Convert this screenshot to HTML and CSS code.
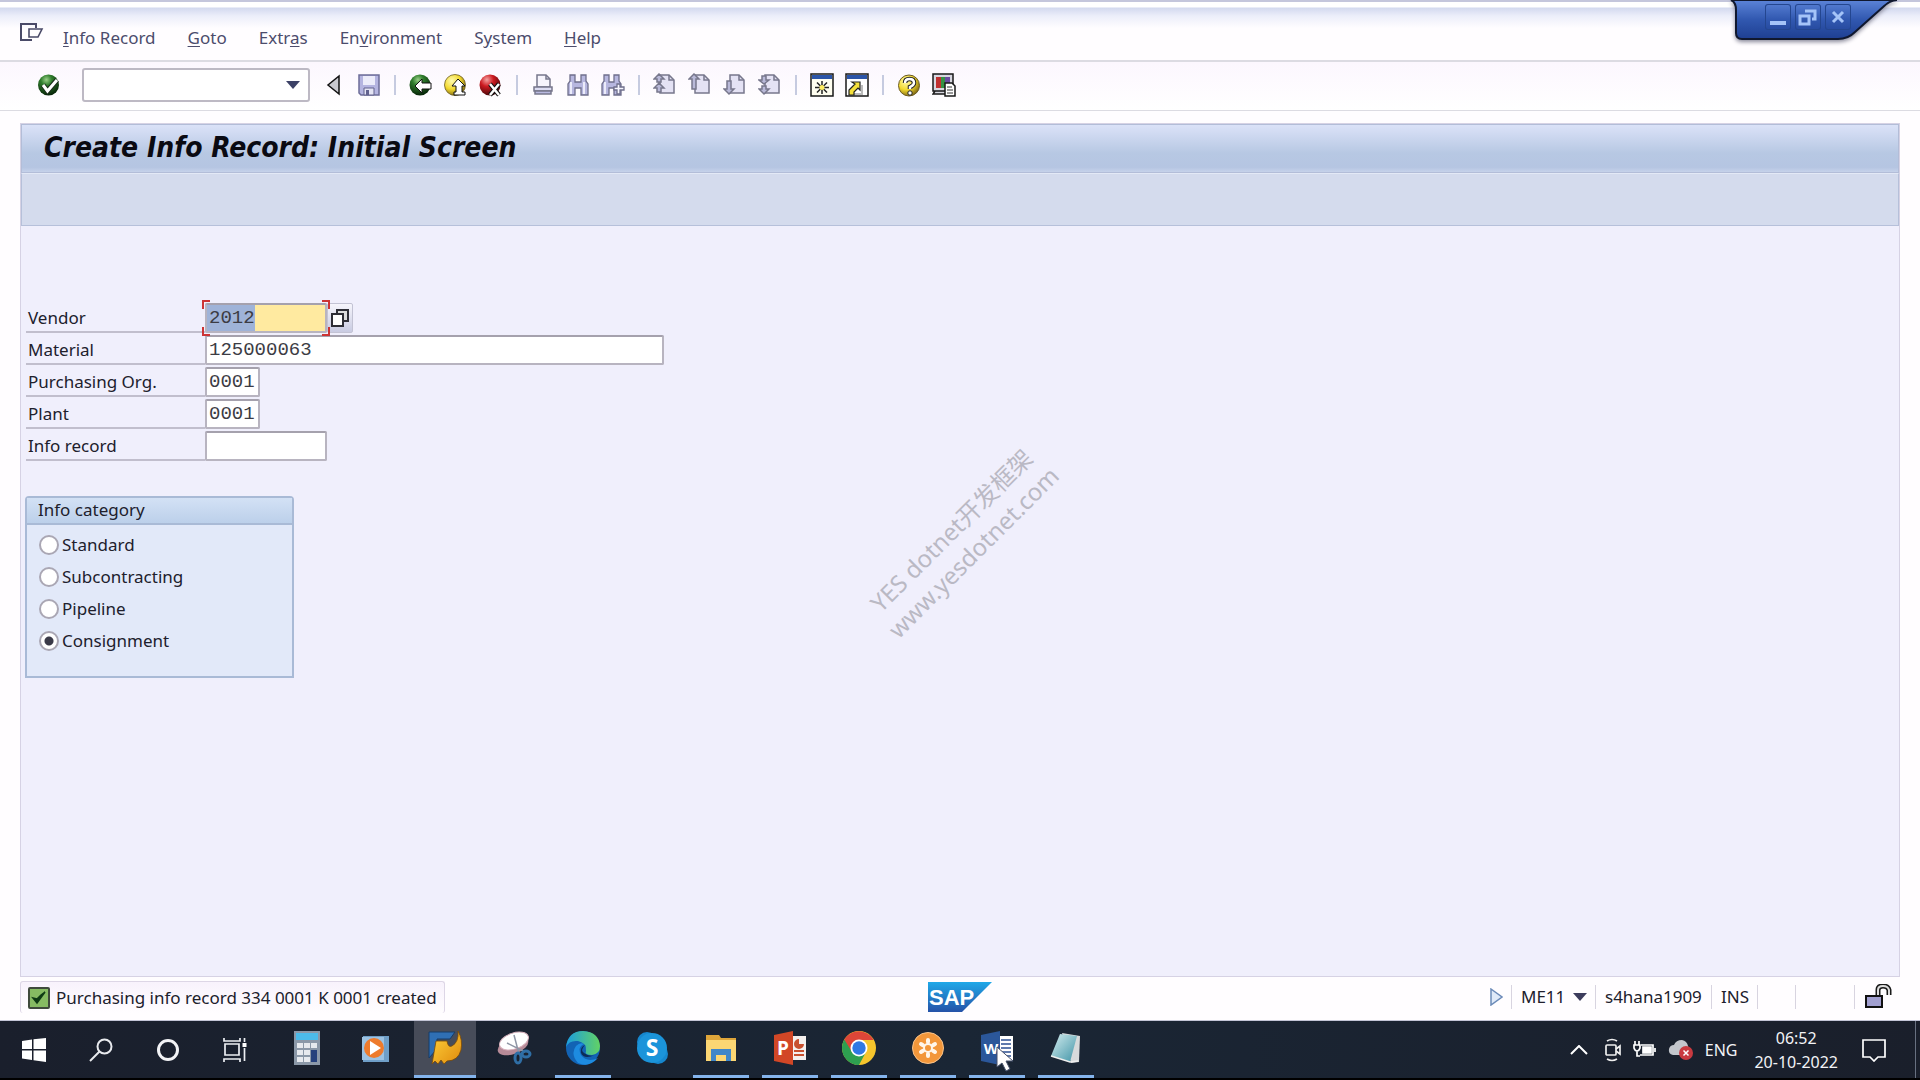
FILE: index.html
```html
<!DOCTYPE html>
<html lang="en">
<head>
<meta charset="utf-8">
<title>Create Info Record: Initial Screen</title>
<link rel="stylesheet" href="styles.css">
</head>
<body>
<svg class="defs" width="0" height="0" aria-hidden="true">
  <defs>
    <radialGradient id="gGreen" cx=".4" cy=".25" r=".75"><stop offset="0" stop-color="#9ad088"/><stop offset=".35" stop-color="#2f7d2c"/><stop offset="1" stop-color="#072508"/></radialGradient>
    <radialGradient id="gYellow" cx=".35" cy=".3" r=".8"><stop offset="0" stop-color="#fffbb0"/><stop offset=".5" stop-color="#f3d92e"/><stop offset="1" stop-color="#6b5510"/></radialGradient>
    <radialGradient id="gRed" cx=".35" cy=".25" r=".8"><stop offset="0" stop-color="#f4a0a0"/><stop offset=".4" stop-color="#cc1a20"/><stop offset="1" stop-color="#3c0508"/></radialGradient>
    <linearGradient id="gBlue" x1="0" y1="0" x2="0" y2="1"><stop offset="0" stop-color="#5c84d8"/><stop offset=".5" stop-color="#3158b0"/><stop offset="1" stop-color="#1e3f92"/></linearGradient>
    <linearGradient id="gSap" x1="0" y1="0" x2="0" y2="1"><stop offset="0" stop-color="#1fa8e8"/><stop offset="1" stop-color="#2552a8"/></linearGradient>
    <linearGradient id="gEdge" x1="0" y1="0" x2="1" y2="0"><stop offset="0" stop-color="#1b9de0"/><stop offset="1" stop-color="#62d264"/></linearGradient>
    <linearGradient id="gNote" x1="0" y1="0" x2="1" y2="1"><stop offset="0" stop-color="#d5eef0"/><stop offset="1" stop-color="#3f93a6"/></linearGradient>
    <linearGradient id="gGold" x1="0" y1="0" x2="1" y2="1"><stop offset="0" stop-color="#ffd23c"/><stop offset="1" stop-color="#e08a0c"/></linearGradient>
    <path id="page" d="M7 2h9l5 5v13H7z"/>
  </defs>
</svg>

<header class="menubar">
  <svg class="menu-icon" width="24" height="22" viewBox="0 0 24 22" fill="none" stroke="#4a4a68" stroke-width="2"><path d="M16 5V1H1v16h11"/><path d="M9 6h13l-4 8H9z" stroke-width="1.6"/></svg>
  <nav class="menus">
    <a href="#"><u>I</u>nfo Record</a>
    <a href="#"><u>G</u>oto</a>
    <a href="#">Extr<u>a</u>s</a>
    <a href="#">En<u>v</u>ironment</a>
    <a href="#">S<u>y</u>stem</a>
    <a href="#"><u>H</u>elp</a>
  </nav>
  <div class="window-controls">
    <svg class="window-tab" width="176" height="46" viewBox="0 0 176 46"><path d="M4 0q5 2 5 10v23q0 6 6 6h96q10 0 17-7l28-25q7-7 14-7z" fill="url(#gBlue)" stroke="#10182f" stroke-width="2"/></svg>
    <button aria-label="Minimize"><svg width="26" height="26" viewBox="0 0 26 26"><path d="M5 17h16v4H5z" fill="#a5c4f8"/></svg></button>
    <button aria-label="Restore"><svg width="26" height="26" viewBox="0 0 26 26" fill="none" stroke="#a5c4f8" stroke-width="3"><path d="M5 12h9v8H5z"/><path d="M10 7h10v8h-3"/></svg></button>
    <button aria-label="Close"><svg width="26" height="26" viewBox="0 0 26 26" stroke="#a5c4f8" stroke-width="3"><path d="M8 8l10 10M18 8L8 18"/></svg></button>
  </div>
</header>

<div class="toolbar">
  <button aria-label="Enter"><svg width="24" height="24" viewBox="0 0 24 24"><circle cx="11.500" cy="12" r="10.500" fill="url(#gGreen)"/><path d="M6 12l4.500 6L20 7" fill="none" stroke="#1a2b1a" stroke-width="5"/><path d="M6 12l4.500 6L20 7" fill="none" stroke="#fff" stroke-width="3"/></svg></button>
  <div class="command">
    <input type="text" aria-label="Command field">
    <svg width="14" height="8" viewBox="0 0 14 8"><path d="M0 0h14L7 8z" fill="#3c4166"/></svg>
  </div>
  <button aria-label="Collapse command field"><svg width="24" height="24" viewBox="0 0 24 24"><path d="M17 3v18L6 12z" fill="#c9c9cf" stroke="#111" stroke-width="1.500"/></svg></button>
  <button aria-label="Save"><svg width="24" height="24" viewBox="0 0 24 24"><path d="M2 2h20v20H4l-2-2z" fill="#b4b4e0" stroke="#6c6c98" stroke-width="1.500"/><path d="M6 3h12v9H6z" fill="#ececfa"/><path d="M7 15h10v7H7z" fill="#e4e4f4" stroke="#62628e"/><path d="M9 17h3v5H9z" fill="#62628e"/></svg></button>
  <span class="sep"></span>
  <button aria-label="Back"><svg width="24" height="24" viewBox="0 0 24 24"><circle cx="11" cy="12" r="10.500" fill="url(#gGreen)"/><path d="M6 13l7-7v4h9v6h-9v4z" fill="#fff" stroke="#111"/></svg></button>
  <button aria-label="Exit"><svg width="24" height="24" viewBox="0 0 24 24"><circle cx="11" cy="12" r="10.500" fill="url(#gYellow)" stroke="#6a5a20" stroke-width=".8"/><path d="M14 6l7 7h-3v6h3v3h-11v-3h2v-6H8z" fill="#fff" stroke="#111"/></svg></button>
  <button aria-label="Cancel"><svg width="24" height="24" viewBox="0 0 24 24"><circle cx="11" cy="12" r="10.500" fill="url(#gRed)"/><path d="M11 11l9 11M20 11l-9 11" stroke="#111" stroke-width="4.500"/><path d="M11 11l9 11M20 11l-9 11" stroke="#fff" stroke-width="2.500"/></svg></button>
  <span class="sep"></span>
  <button aria-label="Print"><svg width="24" height="24" viewBox="0 0 24 24" stroke="#77778c" stroke-width="1.500"><path d="M6 14V2h9l4 4v8z" fill="#f6f4fc"/><path d="M15 2v4h4" fill="none"/><path d="M3 14h18v4H3z" fill="#dcdcf2"/><path d="M4 18h16v3H4z" fill="#b9b9e0"/></svg></button>
  <button aria-label="Find"><svg width="24" height="24" viewBox="0 0 24 24" fill="#b7b7df" stroke="#6f6f8c" stroke-width="1.300"><path d="M4 2h5v7h6V2h5v6l2 3v11h-7v-7H9v7H2V11l2-3z"/><path d="M5 9v12M18 9v12" stroke="#ececfa" stroke-width="2"/></svg></button>
  <button aria-label="Find next"><svg width="24" height="24" viewBox="0 0 24 24" fill="#b7b7df" stroke="#6f6f8c" stroke-width="1.300"><path d="M3 2h5v7h5V2h5v6l2 3v11h-7v-7H8v7H1V11l2-3z"/><path d="M4 9v12" stroke="#ececfa" stroke-width="2"/><path d="M16 11h3v3h4v3h-4v4h-3v-4h-3v-3h3z" fill="#f7f7ff"/></svg></button>
  <span class="sep"></span>
  <button aria-label="First page"><svg width="24" height="24" viewBox="0 0 24 24" fill="#e4e2f4" stroke="#77778c" stroke-width="1.500"><use href="#page"/><path d="M16 2v5h5" fill="none"/><path d="M6 1l5 5H8v3H4V6H1zM6 10l5 5H8v4H4v-4H1z" fill="#b9b9d8"/></svg></button>
  <button aria-label="Previous page"><svg width="24" height="24" viewBox="0 0 24 24" fill="#e4e2f4" stroke="#77778c" stroke-width="1.500"><use href="#page"/><path d="M16 2v5h5" fill="none"/><path d="M6 1l5 5H8v10H4V6H1z" fill="#b9b9d8"/></svg></button>
  <button aria-label="Next page"><svg width="24" height="24" viewBox="0 0 24 24" fill="#e4e2f4" stroke="#77778c" stroke-width="1.500"><use href="#page"/><path d="M16 2v5h5" fill="none"/><path d="M6 21l5-5H8V8H4v8H1z" fill="#b9b9d8"/></svg></button>
  <button aria-label="Last page"><svg width="24" height="24" viewBox="0 0 24 24" fill="#e4e2f4" stroke="#77778c" stroke-width="1.500"><use href="#page"/><path d="M16 2v5h5" fill="none"/><path d="M6 11l5-4H8V3H4v4H1zM6 21l5-5H8v-3H4v3H1z" fill="#b9b9d8"/></svg></button>
  <span class="sep"></span>
  <button aria-label="New session"><svg width="24" height="24" viewBox="0 0 24 24"><path d="M1 1h22v22H1z" fill="#fffef0" stroke="#181818" stroke-width="1.500"/><path d="M2 2h20v4H2z" fill="#2c55a8"/><path d="M12 8v13M5 14.500h14M7 9.500l10 10M17 9.500l-10 10" stroke="#222" stroke-width="1.500"/><circle cx="12" cy="14.500" r="2.500" fill="#ffee60"/></svg></button>
  <button aria-label="Create shortcut"><svg width="24" height="24" viewBox="0 0 24 24"><path d="M1 1h22v22H1z" fill="#fff" stroke="#181818" stroke-width="1.500"/><path d="M2 2h20v4H2z" fill="#2c55a8"/><path d="M17 12v9H9" fill="none" stroke="#bbb" stroke-width="2"/><path d="M7 9h8v8l-2-2-4 4v3H4v-5l6-6z" fill="#f5e03a" stroke="#222" stroke-width="1.200"/></svg></button>
  <span class="sep"></span>
  <button aria-label="Help"><svg width="24" height="24" viewBox="0 0 24 24" fill="none"><circle cx="12" cy="12.500" r="10.500" fill="url(#gYellow)" stroke="#6b5a20"/><path d="M8 10q0-4 4.500-4t4.500 4q0 2-4 4v2" stroke="#222" stroke-width="4.500"/><path d="M8 10q0-4 4.500-4t4.500 4q0 2-4 4v2" stroke="#fff" stroke-width="2.500"/><circle cx="13" cy="20" r="2.200" fill="#fff" stroke="#222"/></svg></button>
  <button aria-label="Customize local layout"><svg width="24" height="24" viewBox="0 0 24 24"><path d="M1 1h20v17H1zM3 18h16l2 3H1z" fill="#d7d7e0" stroke="#181818" stroke-width="1.500"/><path d="M4 4h5v11H4z" fill="#c03030"/><path d="M9 4h4v11H9z" fill="#359245"/><path d="M13 4h5v11h-5z" fill="#6a4aa0"/><path d="M13 10h7l3 3v10H13z" fill="#fff" stroke="#181818" stroke-width="1.500"/><path d="M15 14h5M15 17h6M15 20h6" stroke="#333"/></svg></button>
</div>

<main class="screen">
  <h1 class="title">Create Info Record: Initial Screen</h1>
  <div class="app-toolbar"></div>

  <form class="fields">
    <div class="row">
      <label for="vendor">Vendor</label>
      <div class="active-field">
        <input class="w-medium" id="vendor" type="text" value="2012">
        <svg class="focus-frame" width="128" height="36" viewBox="0 0 128 36" fill="none" stroke="#cc3434" stroke-width="2"><path d="M1 9V1h7M120 1h7v8M1 27v8h7M120 35h7v-8"/></svg>
      </div>
      <button class="match" type="button" aria-label="Possible entries"><svg width="20" height="20" viewBox="0 0 20 20" stroke="#2e2e36" stroke-width="2"><path d="M7 2h11v11H7z" fill="#ddd"/><path d="M2 6h11v12H2z" fill="#fff"/></svg></button>
    </div>
    <div class="row"><label for="material">Material</label><input class="w-long" id="material" type="text" value="125000063"></div>
    <div class="row"><label for="porg">Purchasing Org.</label><input class="w-short" id="porg" type="text" value="0001"></div>
    <div class="row"><label for="plant">Plant</label><input class="w-short" id="plant" type="text" value="0001"></div>
    <div class="row"><label for="info">Info record</label><input class="w-medium" id="info" type="text"></div>

    <section class="category" role="radiogroup" aria-labelledby="cat">
      <h2 id="cat">Info category</h2>
      <label><input type="radio" name="category">Standard</label>
      <label><input type="radio" name="category">Subcontracting</label>
      <label><input type="radio" name="category">Pipeline</label>
      <label><input type="radio" name="category" checked>Consignment</label>
    </section>
  </form>
  <p class="watermark">YES dotnet开发框架<br>www.yesdotnet.com</p>
</main>

<footer class="statusbar">
  <div class="message">
    <svg width="22" height="22" viewBox="0 0 22 22"><rect x="1" y="1" width="20" height="20" rx="1" fill="#86bb62" stroke="#3f4a3c" stroke-width="2"/><path d="M5 11l4 5 8-11-4 3-4 4z" fill="#0f3b14" stroke="#0f3b14" stroke-width="1.500"/></svg>
    <span>Purchasing info record 334 0001 K 0001 created</span>
  </div>
  <svg class="sap" width="64" height="30" viewBox="0 0 64 30"><path d="M0 0h64L34 30H0z" fill="url(#gSap)"/><text x="1" y="23">SAP</text></svg>
  <div class="session">
    <svg class="expand" width="13" height="18" viewBox="0 0 13 18"><path d="M1 1l11 8L1 17z" fill="#dfe9f8" stroke="#6b8ab8" stroke-width="1.500"/></svg>
    <span class="cell tcode">ME11 <svg width="14" height="8" viewBox="0 0 14 8"><path d="M0 0h14L7 8z" fill="#3c3c5c"/></svg></span>
    <span class="cell host">s4hana1909</span>
    <span class="cell mode">INS</span>
    <span class="cell gap-a"></span>
    <span class="cell gap-b"></span>
    <span class="cell lock"><svg width="28" height="26" viewBox="0 0 28 26"><path d="M14 12V6q0-4 5-4t6 4v5" fill="none" stroke="#1a1a1a" stroke-width="5"/><path d="M14 12V6q0-4 5-4t6 4v5" fill="none" stroke="#ddd" stroke-width="2"/><path d="M2 12h16v11H2z" fill="#a19fd0" stroke="#111" stroke-width="2"/></svg></span>
  </div>
</footer>

<div class="taskbar">
  <div class="system-apps">
    <button aria-label="Start"><svg width="24" height="24" viewBox="0 0 24 24" fill="#fff"><path d="M0 3l10-1.500V11H0zM11.500 1.300L24 0v11H11.500zM0 12.500h10V22L0 20.500zM11.500 12.500H24V24l-12.500-1.700z"/></svg></button>
    <button aria-label="Search"><svg width="24" height="24" viewBox="0 0 24 24" fill="none" stroke="#e8eaee" stroke-width="2"><circle cx="15.500" cy="8.500" r="7"/><path d="M10.500 13.500L1 23"/></svg></button>
    <button aria-label="Cortana"><svg width="24" height="24" viewBox="0 0 24 24" fill="none" stroke="#f2f3f6" stroke-width="3"><circle cx="12" cy="12" r="9.500"/></svg></button>
    <button aria-label="Task view"><svg width="24" height="24" viewBox="0 0 24 24" fill="none" stroke="#eceef2" stroke-width="1.700"><path d="M2 6h14v11H2zM1 0v3h16V0M1 24v-3h16v3M21.500 0v4M21.500 10v13"/><path d="M19.500 5h4v4h-4z" fill="#fff" stroke="none"/></svg></button>
  </div>
  <div class="apps">
    <button aria-label="Calculator"><svg width="36" height="36" viewBox="0 0 36 36"><path d="M5 1h26v34H5z" fill="#8b98a8"/><path d="M7 3h22v7H7z" fill="#4cbbea"/><path d="M8 13h6v5H8zM15 13h6v5h-6zM22 13h6v5h-6zM8 20h6v5H8zM15 20h6v5h-6zM8 27h6v5H8zM15 27h6v5h-6z" fill="#e6e9ee"/><path d="M22 20h6v12h-6z" fill="#25407c"/></svg></button>
    <button aria-label="Media player"><svg width="36" height="36" viewBox="0 0 36 36"><path d="M5 6h26v26H5z" fill="#6f9fc8"/><path d="M4 7h22v23H4z" fill="#9cc2e2"/><circle cx="16" cy="18" r="10" fill="#ee7b2c"/><path d="M12 11l11 7-11 7z" fill="#fff"/></svg></button>
    <button class="active" aria-label="SAP Logon"><svg width="36" height="36" viewBox="0 0 36 36"><path d="M2 2h26l-5 7H10v10l-8 9z" fill="#2f6fb4" stroke="#173c68"/><path d="M9 11h11q1 7 5 5 7-4 6-15 5 9 3 19-3 11-14 11l-3 3-3-4-3 4-3-3-3 3z" fill="url(#gGold)" stroke="#7a4a08" stroke-width=".8"/></svg></button>
    <button aria-label="Snipping tool"><svg width="36" height="36" viewBox="0 0 36 36"><ellipse cx="17" cy="16" rx="16" ry="8" transform="rotate(-20 17 16)" fill="#b78b98"/><ellipse cx="18" cy="11" rx="15" ry="8" transform="rotate(-18 18 11)" fill="#fff" stroke="#d7b0bb"/><path d="M18 5l5 19M11 13l18 9" stroke="#8f96a5" stroke-width="1.500"/><g fill="none" stroke="#2f6ea5" stroke-width="3"><ellipse cx="22" cy="28" rx="3" ry="5"/><ellipse cx="30" cy="24" rx="4" ry="3"/></g></svg></button>
    <button class="open" aria-label="Edge"><svg width="36" height="36" viewBox="0 0 36 36"><circle cx="18" cy="18" r="17" fill="#1263b4"/><path d="M1 17Q3 1 18 1q16 1 17 15 0 8-8 9-8 0-6-4 1-8-8-10Q4 10 1 17z" fill="url(#gEdge)"/><path d="M19 14q-7 3-3 11 6 8 17 3-9 10-20 5-8-9-2-17 4-4 8-2z" fill="#1d8be0"/><path d="M20 15q-5 5-1 8 5 4 11 2-11 5-14-2-1-6 4-8z" fill="#0d2c57"/></svg></button>
    <button aria-label="Skype"><svg width="36" height="36" viewBox="0 0 36 36"><circle cx="13" cy="12" r="10" fill="#1687ce"/><circle cx="24" cy="24" r="10" fill="#1687ce"/><circle cx="18" cy="18" r="15" fill="#1b94da"/><text class="glyph skype" x="18" y="26">S</text></svg></button>
    <button class="open" aria-label="File explorer"><svg width="36" height="36" viewBox="0 0 36 36"><path d="M3 5h13l2 3h15v23H3z" fill="#dfa63a"/><path d="M3 10h30v21H3z" fill="#fbd673"/><path d="M8 31V19h20v12h-5v-6H13v6z" fill="#3f86c8"/></svg></button>
    <button class="open" aria-label="PowerPoint"><svg width="36" height="36" viewBox="0 0 36 36"><path d="M18 6h16v24H18z" fill="#f4f0ee"/><path d="M22 21h10M22 25h10" stroke="#c8502e" stroke-width="2"/><path d="M27 9a5 5 0 1 0 5 5h-5z" fill="#c8502e"/><path d="M2 5l19-4v34L2 31z" fill="#d24726"/><text class="glyph" x="11" y="25">P</text></svg></button>
    <button class="open" aria-label="Chrome"><svg width="36" height="36" viewBox="0 0 36 36"><circle cx="18" cy="18" r="17" fill="#f5c52c"/><path d="M18 18L3.300 9.500A17 17 0 0 0 18 35l7-13z" fill="#2e9f50"/><path d="M18 10h14.700A17 17 0 0 0 3.300 9.500L11 22z" fill="#dd4638"/><circle cx="18" cy="18" r="8.500" fill="#fff"/><circle cx="18" cy="18" r="6.700" fill="#2f78e4"/></svg></button>
    <button class="open" aria-label="Meeting"><svg width="36" height="36" viewBox="0 0 36 36"><circle cx="18" cy="18" r="15.500" fill="#f3973a" stroke="#f9c48b"/><g stroke="#fff6ea" stroke-width="4" stroke-linecap="round"><path d="M18 10v2M18 24v2M11 14l2 1.200M23 20.800l2 1.200M11 22l2-1.200M23 15.200l2-1.200"/></g><circle cx="18" cy="18" r="4" fill="none" stroke="#fff6ea" stroke-width="2"/></svg></button>
    <button class="open" aria-label="Word"><svg width="36" height="36" viewBox="0 0 36 36"><path d="M18 6h16v25H18z" fill="#fff"/><path d="M22 10h10M22 14h10M22 18h10M22 22h10M22 26h10" stroke="#2b4f93" stroke-width="1.500"/><path d="M2 5l19-4v34L2 31z" fill="#2b579a"/><text class="glyph word" x="12" y="24">W</text></svg>
      <svg class="cursor" width="18" height="26" viewBox="0 0 18 26"><path d="M1 1v20l5-4 4 8 4-2-4-8h7z" fill="#fff" stroke="#44506a"/></svg></button>
    <button class="open" aria-label="Notepad"><svg width="36" height="36" viewBox="0 0 36 36"><path d="M14 3l18 3-1 26-8 1z" fill="#d7dadb"/><path d="M12 4l17 2-7 26-19-6z" fill="url(#gNote)"/><path d="M3 26l19 6 8-1" fill="none" stroke="#eee" stroke-width="1.500"/></svg></button>
  </div>
  <div class="tray">
    <svg class="more" width="18" height="10" viewBox="0 0 18 10" fill="none" stroke="#fff" stroke-width="2"><path d="M1 9l8-8 8 8"/></svg>
    <svg width="18" height="24" viewBox="0 0 18 24" fill="none" stroke="#eee" stroke-width="1.700"><rect x="2" y="7" width="10" height="10" rx="1"/><path d="M12 11l4-3v8l-4-3M3 3q5-3 10 0M3 21q5 3 10 0"/></svg>
    <svg width="24" height="20" viewBox="0 0 24 20" fill="none" stroke="#fff" stroke-width="1.700"><path d="M8 5h12v10H7M22 8v4M2 1v4M6 1v4M1 5h6v3q-1 3-3 3t-3-3zM4 11v5h3"/><path d="M10 7h8v6h-8z" fill="#fff"/></svg>
    <svg width="26" height="22" viewBox="0 0 26 22"><path d="M5 16q-5-1-4-6 1-4 5-4 2-5 8-5 5 1 6 6l2 9z" fill="#c3c6cc"/><circle cx="18" cy="14" r="7" fill="#c93a40"/><path d="M15.500 11.500l5 5M20.500 11.500l-5 5" stroke="#fff" stroke-width="1.500"/></svg>
    <span class="lang">ENG</span>
    <time class="clock">06:52<br>20-10-2022</time>
    <button aria-label="Notifications"><svg width="24" height="24" viewBox="0 0 24 24" fill="none" stroke="#fff" stroke-width="1.700"><path d="M1 2h22v17h-7l-4 4-4-4H1z"/></svg></button>
    <span class="peek"></span>
  </div>
</div>
</body>
</html>
```
FILE: styles.css
```css
* { box-sizing: border-box; }

body {
  margin: 0;
  min-height: 100vh;
  display: flex;
  flex-direction: column;
  background: #fffdff;
  color: #20202c;
  font: 17px/24px "Noto Sans", "DejaVu Sans", sans-serif;
}

svg { display: block; flex: none; }
.defs { position: absolute; }
button { padding: 0; border: 0; background: none; font: inherit; color: inherit; }

/* menu bar */
.menubar {
  position: relative;
  display: flex;
  align-items: center;
  height: 62px;
  padding: 13px 20px 0;
  border-top: 2px solid #c4c6dc;
  border-bottom: 2px solid #dcdbe2;
  background: linear-gradient(#fff 0 5px, #d3d9ef 6px, #eceefa 14px, #fffdff 26px);
}
.menu-icon { margin-bottom: 8px; }
.menus { display: flex; gap: 32px; margin-left: 19px; }
.menus a { color: #4c4c6c; text-decoration: none; }
.menus u { text-underline-offset: 2px; }
.window-controls {
  position: absolute;
  top: -2px;
  right: 19px;
  width: 168px;
  height: 46px;
  padding: 4px 0 0 32px;
  display: flex;
  gap: 4px;
}
.window-controls button {
  position: relative;
  width: 26px;
  height: 26px;
  border-radius: 3px;
  box-shadow: inset 0 0 0 1px #24468f;
}
.window-tab { position: absolute; left: -6px; top: 0; filter: drop-shadow(0 2px 2px #889); }

/* standard toolbar */
.toolbar {
  display: flex;
  align-items: center;
  height: 49px;
  padding: 0 0 2px 31px;
  border-bottom: 1px solid #dcdbe2;
  background: linear-gradient(#fcf7fe, #fff);
}
.toolbar button { width: 35px; display: flex; justify-content: center; }
.sep { width: 17px; height: 20px; background: linear-gradient(#c6cbe0, #c6cbe0) center / 2px 100% no-repeat; }
.command {
  display: flex;
  align-items: center;
  width: 228px;
  height: 34px;
  margin: 0 6px 0 16px;
  padding-right: 8px;
  border: 2px solid #bdb9c4;
  border-radius: 3px;
  background: #fff;
}
.command input { flex: 1; min-width: 0; border: 0; outline: 0; background: none; font: inherit; }

/* work area */
.screen {
  position: relative;
  flex: 1;
  margin: 12px 20px 0;
  border: 1px solid #d6d2e4;
  background: #f0effc;
}
.title {
  margin: 0;
  height: 49px;
  padding: 0 22px;
  border: 1px solid #b3bdd8;
  background: linear-gradient(#dbe2f8, #b7c8e3 60%, #b5c5e2 90%, #c6d2ea);
  color: #0a0a12;
  font: italic bold 28px/45px "DejaVu Sans Condensed", "DejaVu Sans", sans-serif;
}
.app-toolbar { height: 53px; border: 1px solid #b6c0da; border-top-color: #e3e9f6; background: #d4dbed; }

.fields { padding: 75px 0 0 5px; }
.row { display: flex; height: 32px; align-items: flex-end; }
.row label { width: 179px; height: 30px; padding: 3px 2px 0; border-bottom: 2px solid #c1becd; }
.row input {
  height: 30px;
  padding: 0 2px;
  border: 2px solid #b8b4c0;
  border-top-color: #a5a1ad;
  border-radius: 2px;
  outline: 0;
  background: #fff;
  color: #3c3c44;
  font: 19px/24px "Liberation Mono", monospace;
}
.row .w-medium { width: 122px; }
.row .w-long { width: 459px; }
.row .w-short { width: 55px; }
.active-field { position: relative; display: flex; }
.active-field #vendor { background: linear-gradient(90deg, #9fb3d8 48px, #ffeaa0 48px); }
.focus-frame { position: absolute; left: -3px; top: -3px; }
.match {
  display: flex;
  align-items: center;
  width: 26px;
  height: 30px;
  padding-left: 2px;
  border: 1px solid #c3c3d4;
  border-radius: 2px;
  background: linear-gradient(#f6f5fc, #c9cbe2);
}

.category {
  width: 269px;
  height: 182px;
  margin-top: 35px;
  margin-left: -1px;
  border: 2px solid #a9bad6;
  border-radius: 4px 4px 0 0;
  background: #e2e9f9;
}
.category h2 {
  margin: 0 0 4px;
  height: 27px;
  padding-left: 11px;
  border-bottom: 2px solid #a9bad6;
  background: linear-gradient(#d3e1f5, #bcd0ea);
  font: inherit;
}
.category label { display: flex; align-items: center; gap: 3px; height: 32px; padding-left: 12px; }
.category input {
  appearance: none;
  width: 20px;
  height: 20px;
  margin: 0;
  border: 2px solid #aaa7b4;
  border-radius: 50%;
  background: #fff;
}
.category input:checked { background: radial-gradient(circle, #3a3a48 4px, #fff 5px); }

.watermark {
  position: absolute;
  left: 941px;
  top: 417px;
  margin: 0;
  color: #bab9c4;
  font: 24px/31px "Noto Sans", "Noto Sans CJK SC", sans-serif;
  text-align: center;
  white-space: nowrap;
  transform: translate(-50%, -50%) rotate(-45deg);
  pointer-events: none;
}

/* status bar */
.statusbar {
  display: grid;
  grid-template-columns: 1fr auto 1fr;
  align-items: center;
  height: 44px;
  padding: 0 20px 3px;
  border-bottom: 1px solid #c3c5d6;
}
.message {
  display: flex;
  justify-self: start;
  align-items: center;
  gap: 6px;
  height: 32px;
  padding: 0 7px;
  border: 1px solid #ddd6e6;
  border-bottom: 0;
  border-radius: 3px;
  background: linear-gradient(#f8f2fc, #fffdff);
}
.sap text { fill: #fff; font: bold 22px "Liberation Sans", sans-serif; }
.session { display: flex; justify-self: end; align-items: center; }
.expand { margin-right: 8px; }
.cell { display: flex; align-items: center; height: 24px; padding-left: 9px; border-left: 1px solid #d8d4e0; }
.tcode { width: 84px; gap: 8px; }
.host { width: 116px; }
.mode { width: 46px; }
.gap-a { width: 38px; }
.gap-b { width: 59px; }
.lock { width: 46px; }

/* taskbar */
.taskbar {
  display: flex;
  height: 59px;
  border-bottom: 2px solid #000;
  background: linear-gradient(90deg, #1a1f2c, #1a2635 50%, #1a1f2b);
  color: #f2f3f6;
}
.taskbar button { display: flex; align-items: center; justify-content: center; }
.system-apps { display: flex; }
.system-apps button { width: 67px; }
.apps { display: flex; gap: 7px; margin-left: 8px; }
.apps button { position: relative; width: 62px; border-bottom: 3px solid transparent; }
.apps .open { background: linear-gradient(#84b4ec, #84b4ec) center bottom / 56px 3px no-repeat border-box; }
.apps .active { background: #474c59; border-bottom-color: #84b4ec; }
.glyph { fill: #fff; font: bold 19px "Open Sans", sans-serif; text-anchor: middle; }
.skype { font-size: 23px; }
.word { font-size: 15px; }
.cursor { position: absolute; left: 30px; top: 25px; }
.tray { display: flex; align-items: center; margin-left: auto; gap: 11px; font-size: 16px; }
.more { margin-right: 5px; }
.lang { margin-right: 6px; }
.clock { text-align: center; }
.tray button { margin-left: 13px; }
.peek { align-self: stretch; width: 5px; margin-left: 18px; border-left: 1px solid #687080; }
```
